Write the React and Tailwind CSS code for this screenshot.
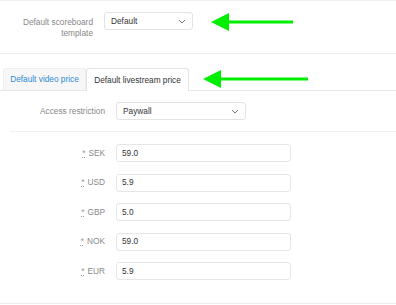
import React from "react";

const font = { fontFamily: '"Liberation Sans", Arial, sans-serif' };

function Chevron() {
  return (
    <svg width="8" height="5" viewBox="0 0 8 5" className="shrink-0">
      <path d="M1 1 L4 4 L7 1" fill="none" stroke="#777" strokeWidth="1" />
    </svg>
  );
}

function Arrow({ len }) {
  return (
    <svg width={len} height="20" viewBox={`0 0 ${len} 20`}>
      <polygon points="0,10 18,1 18,19" fill="#00ee00" />
      <rect x="16" y="8.5" width={len - 16} height="3" fill="#00ee00" />
    </svg>
  );
}

const currencies = [
  ["SEK", "59.0"],
  ["USD", "5.9"],
  ["GBP", "5.0"],
  ["NOK", "59.0"],
  ["EUR", "5.9"],
];

export default function App() {
  return (
    <div className="w-[396px] h-[305px] bg-white overflow-hidden text-[8.3px]" style={font}>
      <div className="border-t border-[#f0f0f0] h-[53px] flex items-start">
        <div className="w-[93px] text-right text-[#888] leading-[11px] pt-[16px]">
          Default scoreboard<br />template
        </div>
        <div className="ml-[11px] mt-[11px] w-[89px] h-[18px] border border-[#e3e3e3] rounded-[3px] flex items-center justify-between pl-[6px] pr-[6px] text-[#333]">
          <span>Default</span>
          <Chevron />
        </div>
        <div className="ml-[18px] mt-[11px]">
          <Arrow len={82} />
        </div>
      </div>
      <div className="border-t border-[#f0f0f0] h-[15px]"></div>
      <div className="flex items-end border-b border-[#e6e6e6] h-[23px]">
        <div className="ml-[3px] w-[83px] h-[22px] bg-[#f7f7f7] border border-b-0 border-[#eeeeee] rounded-t-[3px] flex items-center justify-center text-[#2a8ad4]">
          Default video price
        </div>
        <div className="w-[103px] h-[23px] -mb-px bg-white border border-b-0 border-[#e3e3e3] rounded-t-[3px] flex items-center justify-center text-[#333]">
          Default livestream price
        </div>
        <div className="ml-[14px] mb-[1px] self-center">
          <Arrow len={105} />
        </div>
      </div>
      <div className="flex items-center h-[40px]">
        <div className="w-[105px] text-right text-[#888]">Access restriction</div>
        <div className="ml-[11px] w-[130px] h-[18px] border border-[#e3e3e3] rounded-[3px] flex items-center justify-between pl-[6px] pr-[6px] text-[#333]">
          <span>Paywall</span>
          <Chevron />
        </div>
      </div>
      <div className="ml-[10px] border-t border-[#f0f0f0] h-[13px]"></div>
      <div className="flex flex-col gap-[11.5px]">
        {currencies.map(([c, v]) => (
          <div key={c} className="flex items-center h-[18px]">
            <div className="w-[105px] text-right text-[#888] flex justify-end items-center gap-[3px]">
              <span className="underline decoration-dotted text-[#999]">*</span>
              <span>{c}</span>
            </div>
            <div className="ml-[11px] w-[175px] h-[18px] border border-[#e6e6e6] rounded-[3px] flex items-center pl-[5px] text-[#333]">
              {v}
            </div>
          </div>
        ))}
      </div>
      <div className="mt-[23px] border-t border-[#ececec]"></div>
    </div>
  );
}
